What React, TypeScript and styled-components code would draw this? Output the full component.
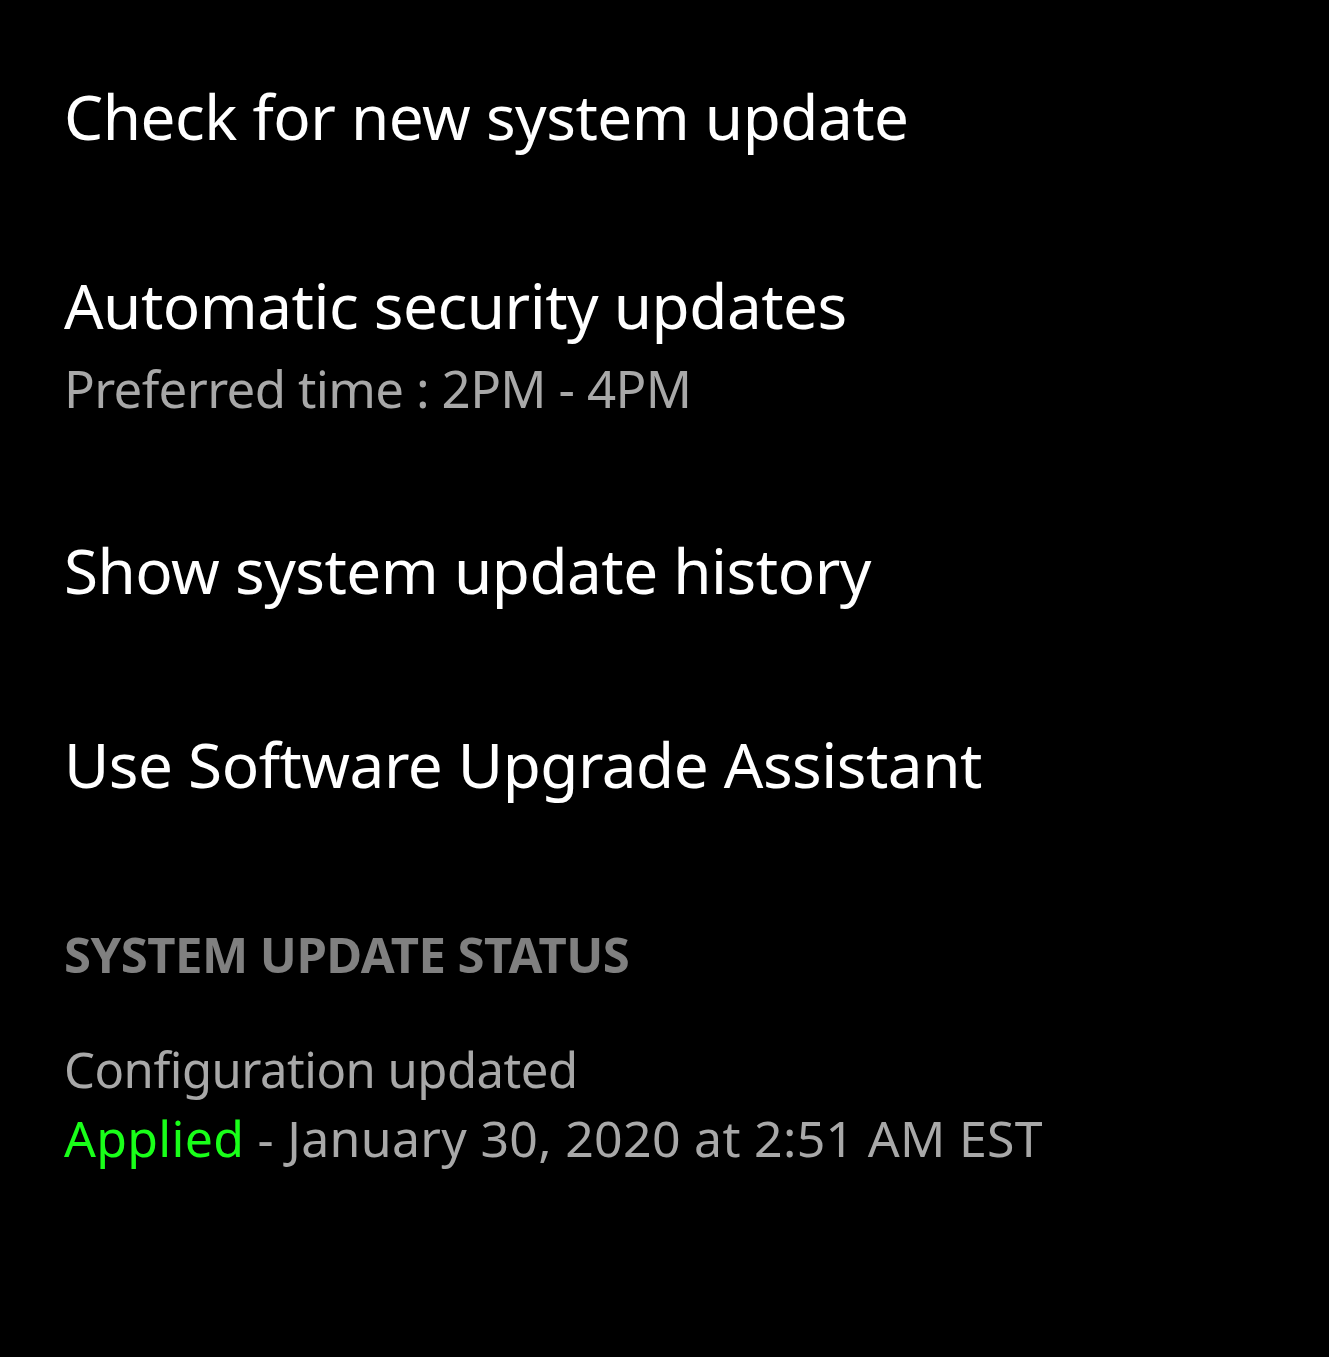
import React from 'react'
import styled, { createGlobalStyle } from 'styled-components'

const GlobalStyle = createGlobalStyle`
  html, body {
    margin: 0;
    padding: 0;
    background: #000;
  }
  body {
    font-family: 'Noto Sans', 'Open Sans', sans-serif;
    color: #fff;
  }
`

const Page = styled.div`
  min-height: 1357px;
  background: #000;
  padding: 19px 0 0 64px;
  box-sizing: border-box;
`

const MenuList = styled.div`
  display: flex;
  flex-direction: column;
`

const MenuItem = styled.div<{ $padTop: number; $padBottom: number }>`
  padding: ${p => p.$padTop}px 0 ${p => p.$padBottom}px;
`

const Title = styled.div`
  font-size: 62px;
  line-height: 74px;
  color: #fff;
  letter-spacing: -0.5px;
`

const Subtitle = styled.div`
  margin-top: 13px;
  font-size: 51px;
  line-height: 66px;
  color: #a8a8a8;
  letter-spacing: -0.65px;
`

const SectionHeader = styled.div`
  margin-top: 63px;
  font-size: 49px;
  line-height: 60px;
  font-weight: 700;
  color: #808080;
  letter-spacing: -0.5px;
`

const StatusBlock = styled.div`
  margin-top: 51px;
  display: flex;
  flex-direction: column;
`

const StatusLine = styled.div<{ $tracking: number; $size: number }>`
  font-size: ${p => p.$size}px;
  line-height: 69px;
  color: #a8a8a8;
  letter-spacing: ${p => p.$tracking}px;
`

const Applied = styled.span`
  color: #19ff19;
`

const items = [
  { title: 'Check for new system update', top: 60, bottom: 60 },
  { title: 'Automatic security updates', sub: 'Preferred time : 2PM - 4PM', top: 55, bottom: 52 },
  { title: 'Show system update history', top: 60, bottom: 60 },
  { title: 'Use Software Upgrade Assistant', top: 60, bottom: 60 },
]

export default function App() {
  return (
    <>
      <GlobalStyle />
      <Page>
        <MenuList>
          {items.map(item => (
            <MenuItem key={item.title} $padTop={item.top} $padBottom={item.bottom}>
              <Title>{item.title}</Title>
              {item.sub && <Subtitle>{item.sub}</Subtitle>}
            </MenuItem>
          ))}
        </MenuList>
        <SectionHeader>SYSTEM UPDATE STATUS</SectionHeader>
        <StatusBlock>
          <StatusLine $size={49} $tracking={-0.5}>Configuration updated</StatusLine>
          <StatusLine $size={50} $tracking={0.3}>
            <Applied>Applied</Applied> - January 30, 2020 at 2:51 AM EST
          </StatusLine>
        </StatusBlock>
      </Page>
    </>
  )
}
